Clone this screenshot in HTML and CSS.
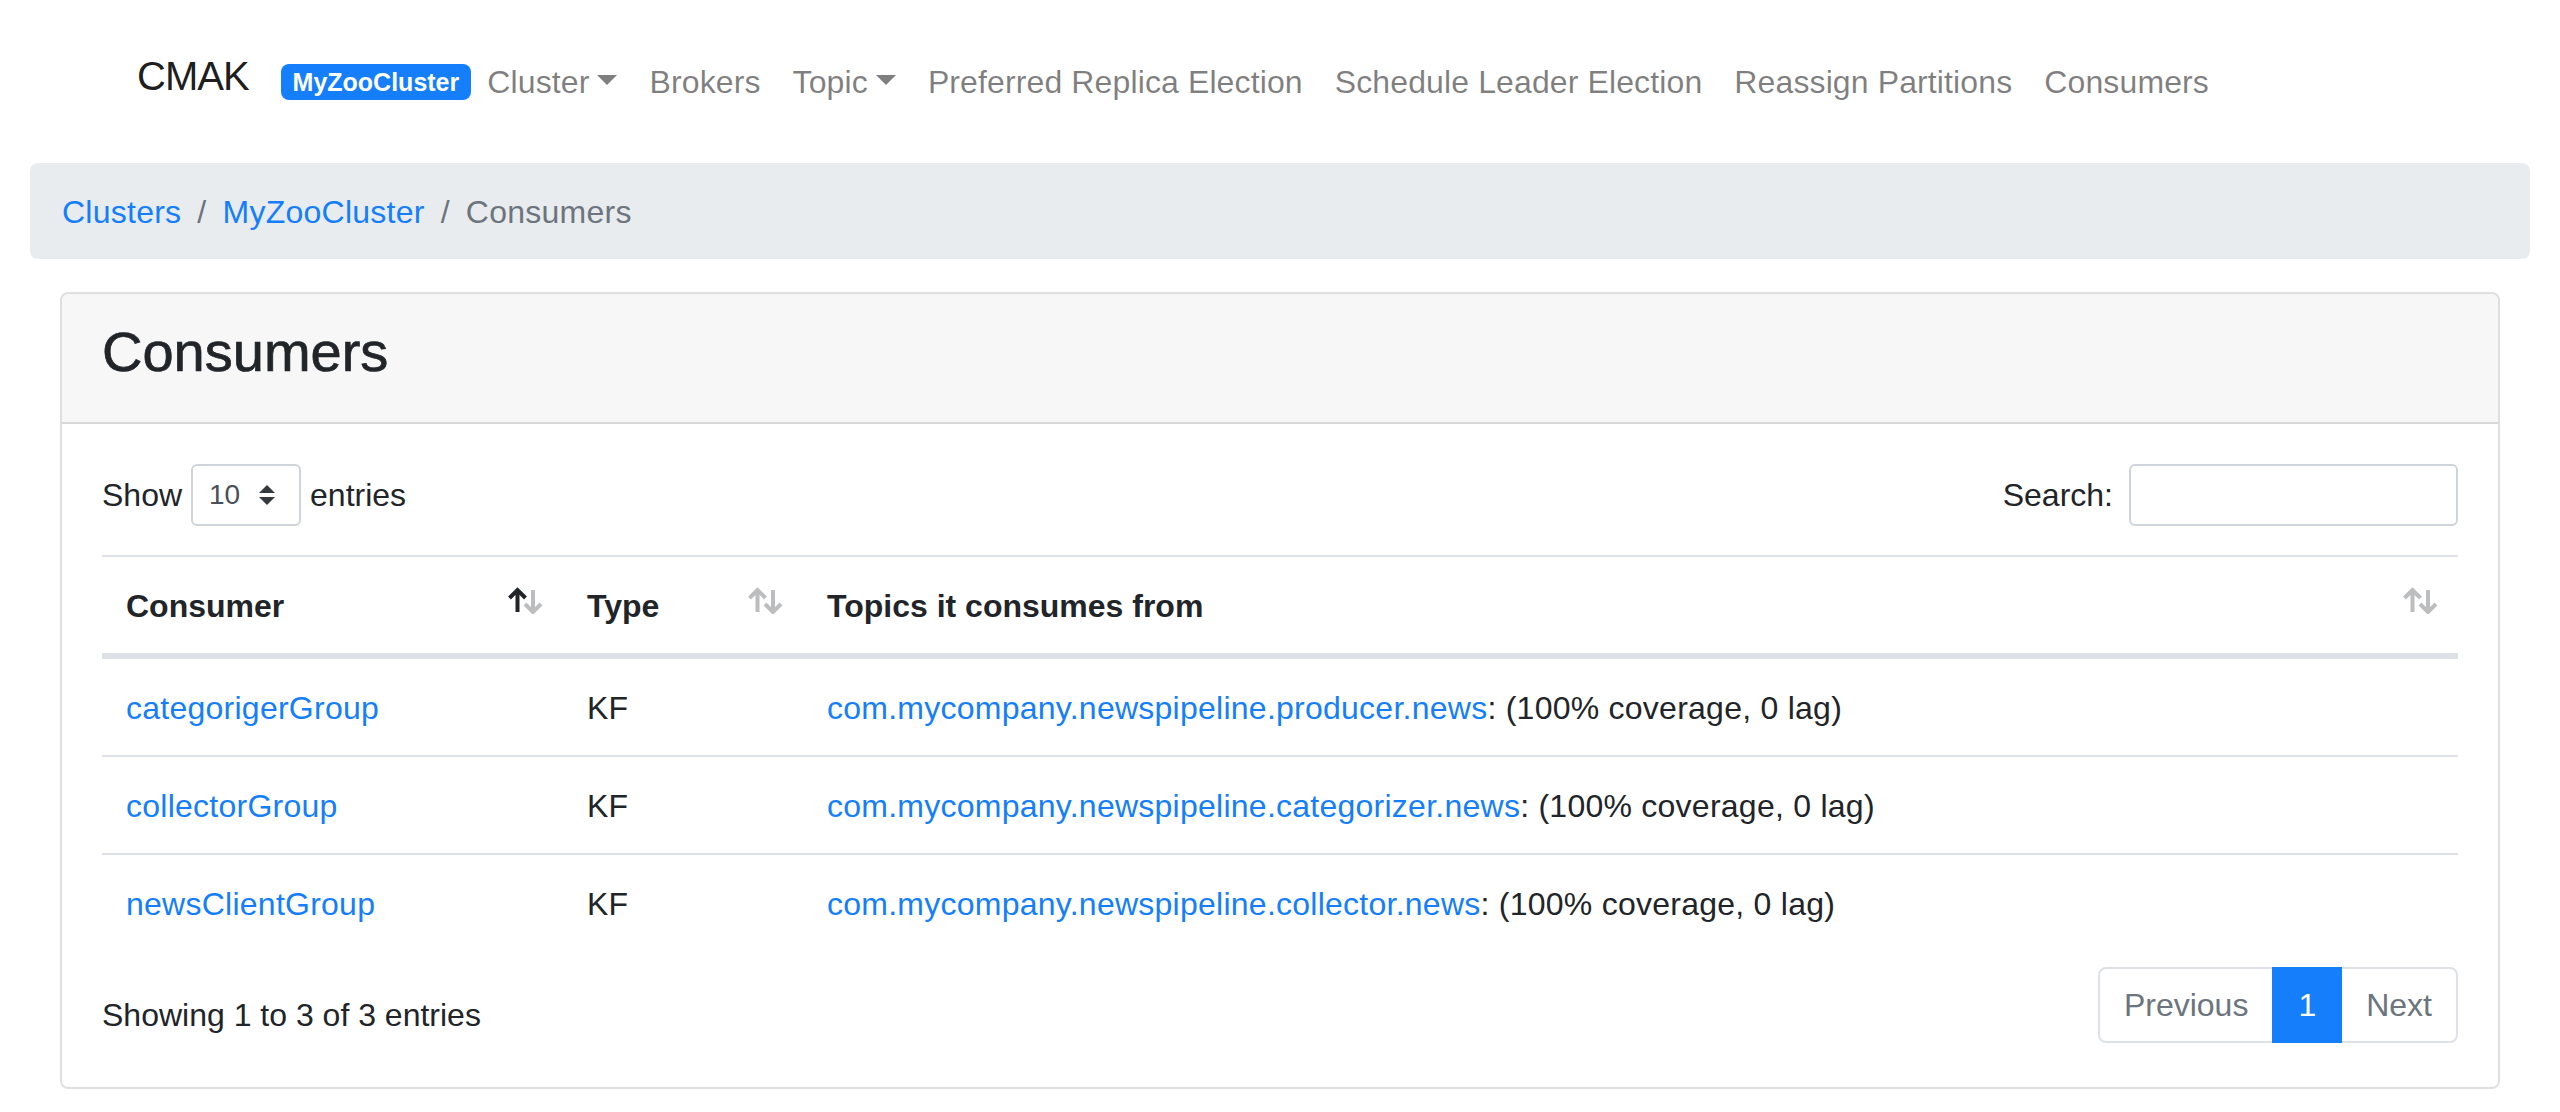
FILE: index.html
```html
<!DOCTYPE html>
<html lang="en">
<head>
<meta charset="utf-8">
<title>CMAK - Consumers</title>
<link rel="stylesheet" href="styles.css">
</head>
<body>
<nav class="navbar">
  <div class="nav-container">
    <a class="brand" href="#">CMAK</a>
    <span class="badge">MyZooCluster</span>
    <ul class="nav">
      <li><a class="nav-link caret" href="#">Cluster</a></li>
      <li><a class="nav-link" href="#">Brokers</a></li>
      <li><a class="nav-link caret" href="#">Topic</a></li>
      <li><a class="nav-link" href="#">Preferred Replica Election</a></li>
      <li><a class="nav-link" href="#">Schedule Leader Election</a></li>
      <li><a class="nav-link" href="#">Reassign Partitions</a></li>
      <li><a class="nav-link" href="#">Consumers</a></li>
    </ul>
  </div>
</nav>
<div class="page">
  <ol class="breadcrumb">
    <li class="crumb"><a href="#">Clusters</a></li>
    <li class="crumb"><a href="#">MyZooCluster</a></li>
    <li class="crumb active">Consumers</li>
  </ol>
  <div class="content">
    <div class="card">
      <div class="card-header"><h3>Consumers</h3></div>
      <div class="card-body">
        <div class="dt-top">
          <div class="dt-length">
            <span>Show</span>
            <span class="select"><span>10</span><svg class="select-arrow" viewBox="0 0 4 5" width="16" height="20"><path d="M2 0L0 2h4zm0 5L0 3h4z" fill="#343a40"/></svg></span>
            <span>entries</span>
          </div>
          <div class="dt-filter">
            <span>Search:</span>
            <span class="search-input"></span>
          </div>
        </div>
        <table class="table">
          <thead>
            <tr>
              <th class="col-consumer sorting">Consumer<svg class="sort-icon" viewBox="0 0 36 27" width="36" height="27"><path class="arrow-on" d="M10.5 25V3M2.5 11L10.5 3L18.5 11"/><path class="arrow-off" d="M26 3V25M18 17L26 25L34 17"/></svg></th>
              <th class="col-type sorting">Type<svg class="sort-icon" viewBox="0 0 36 27" width="36" height="27"><path class="arrow-off" d="M10.5 25V3M2.5 11L10.5 3L18.5 11"/><path class="arrow-off" d="M26 3V25M18 17L26 25L34 17"/></svg></th>
              <th class="sorting">Topics it consumes from<svg class="sort-icon" viewBox="0 0 36 27" width="36" height="27"><path class="arrow-off" d="M10.5 25V3M2.5 11L10.5 3L18.5 11"/><path class="arrow-off" d="M26 3V25M18 17L26 25L34 17"/></svg></th>
            </tr>
          </thead>
          <tbody>
            <tr>
              <td><a href="#">categorigerGroup</a></td>
              <td>KF</td>
              <td><a href="#">com.mycompany.newspipeline.producer.news</a>: (100% coverage, 0 lag)</td>
            </tr>
            <tr>
              <td><a href="#">collectorGroup</a></td>
              <td>KF</td>
              <td><a href="#">com.mycompany.newspipeline.categorizer.news</a>: (100% coverage, 0 lag)</td>
            </tr>
            <tr>
              <td><a href="#">newsClientGroup</a></td>
              <td>KF</td>
              <td><a href="#">com.mycompany.newspipeline.collector.news</a>: (100% coverage, 0 lag)</td>
            </tr>
          </tbody>
        </table>
        <div class="dt-bottom">
          <div class="dt-info">Showing 1 to 3 of 3 entries</div>
          <ul class="pagination">
            <li class="page-item first"><a class="page-link" href="#">Previous</a></li>
            <li class="page-item active"><a class="page-link" href="#">1</a></li>
            <li class="page-item last"><a class="page-link" href="#">Next</a></li>
          </ul>
        </div>
      </div>
    </div>
  </div>
</div>
</body>
</html>
```
FILE: styles.css
```css
* { box-sizing: border-box; }
html, body { margin: 0; padding: 0; }
body {
  font-family: "Liberation Sans", Arial, sans-serif;
  font-size: 32px;
  line-height: 1.5;
  color: #212529;
  background: #fff;
}
a { color: #147efb; text-decoration: none; }

/* Navbar */
.navbar { padding: 42px 64px 41px; }
.nav-container {
  max-width: 2280px;
  margin: 0 auto;
  display: flex;
  align-items: center;
}
.brand {
  font-size: 40px;
  line-height: 60px;
  padding: 4px 0 16px;
  margin-left: -3px;
  margin-right: 32px;
  letter-spacing: -1px;
  color: rgba(0, 0, 0, 0.9);
}
.badge {
  font-size: 25px;
  font-weight: 700;
  line-height: 24px;
  padding: 6px 12px;
  border-radius: 8px;
  background: #147efb;
  color: #fff;
}
.nav { display: flex; list-style: none; margin: 0; padding: 0; }
.nav-link {
  display: block;
  padding: 16px;
  line-height: 48px;
  letter-spacing: 0.12px;
  color: rgba(0, 0, 0, 0.5);
}
.caret::after {
  content: "";
  display: inline-block;
  margin-left: 8px;
  vertical-align: 8px;
  border-top: 10px solid;
  border-left: 10px solid transparent;
  border-right: 10px solid transparent;
  border-bottom: 0;
}

/* Breadcrumb */
.page { padding: 0 30px; }
.breadcrumb {
  display: flex;
  list-style: none;
  margin: 0 0 33px;
  padding: 25px 32px 23px;
  background: #e9ecef;
  border-radius: 8px;
  letter-spacing: 0.25px;
}
.crumb + .crumb { padding-left: 16px; }
.crumb + .crumb::before { content: "/"; padding-right: 16px; color: #6c757d; }
.crumb.active { color: #6c757d; }

/* Card */
.content { padding: 0 30px; }
.card {
  border: 2px solid rgba(0, 0, 0, 0.125);
  border-radius: 8px;
  overflow: hidden;
}
.card-header {
  padding: 24px 40px;
  background: rgba(0, 0, 0, 0.03);
  border-bottom: 2px solid rgba(0, 0, 0, 0.125);
}
.card-header h3 {
  margin: 0 0 13px;
  font-size: 56px;
  font-weight: 500;
  line-height: 1.2;
  -webkit-text-stroke: 0.7px currentColor;
}
.card-body { padding: 40px; }

/* DataTables controls */
.dt-top {
  display: flex;
  justify-content: space-between;
  align-items: center;
  height: 62px;
  margin-bottom: 29px;
}
.dt-length, .dt-filter { display: flex; align-items: center; }
.select {
  display: flex;
  align-items: center;
  justify-content: space-between;
  width: 110px;
  height: 62px;
  margin: 0 9px;
  padding: 0 24px 0 16px;
  border: 2px solid #ced4da;
  border-radius: 6px;
  font-size: 28px;
  color: #495057;
}
.search-input {
  display: block;
  width: 329px;
  height: 62px;
  margin-left: 16px;
  border: 2px solid #ced4da;
  border-radius: 6px;
  background: #fff;
}

/* Table */
.table {
  width: 100%;
  border-collapse: separate;
  border-spacing: 0;
  table-layout: fixed;
}
.table th, .table td {
  padding: 25px 24px 23px;
  text-align: left;
  vertical-align: top;
  line-height: 48px;
  border-top: 2px solid #dee2e6;
}
.table td { letter-spacing: 0.25px; }
.table thead th {
  position: relative;
  font-weight: 700;
  border-bottom: 4px solid #dee2e6;
}
.col-consumer { width: 461px; }
.col-type { width: 240px; }
.sort-icon {
  position: absolute;
  top: 30px;
  right: 20px;
  fill: none;
  stroke-width: 4;
}
.arrow-on { stroke: #212529; }
.arrow-off { stroke: #212529; opacity: 0.3; }

/* Bottom row */
.dt-bottom {
  display: flex;
  justify-content: space-between;
  align-items: flex-start;
  margin-top: 12px;
}
.dt-info { padding-top: 28px; line-height: 48px; }
.pagination { display: flex; list-style: none; margin: 4px 0; padding: 0; }
.page-link {
  display: block;
  padding: 16px 24px;
  line-height: 40px;
  border: 2px solid #dee2e6;
  margin-left: -2px;
  color: #6c757d;
  background: #fff;
}
.first .page-link { margin-left: 0; border-radius: 8px 0 0 8px; }
.last .page-link { border-radius: 0 8px 8px 0; }
.active .page-link {
  position: relative;
  background: #147efb;
  border-color: #147efb;
  color: #fff;
}
```
